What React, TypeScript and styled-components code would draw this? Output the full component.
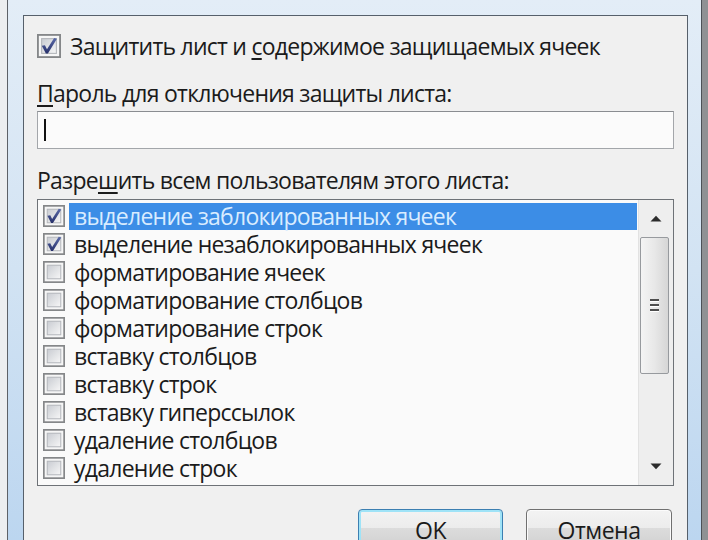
import React, { FC } from 'react'
import styled, { createGlobalStyle } from 'styled-components';

const GlobalStyle = createGlobalStyle`
    html, body {
        margin: 0;
        padding: 0;
        background: #eceef0;
    }
    #root {
        width: 708px;
        height: 540px;
    }
`;

const Screen = styled.div`
    width: 708px;
    height: 540px;
    overflow: hidden;
    padding-left: 7px;
    box-sizing: border-box;
    background: linear-gradient(to right, #eceef0 50%, #8f9194 50%);
    font-family: "Open Sans", "Noto Sans", sans-serif;
    color: #1b1b1b;
`;

const WindowFrame = styled.div`
    width: 695px;
    height: 600px;
    box-sizing: border-box;
    padding: 15px 13px 0 15px;
    border-left: 1px solid #5d6167;
    border-right: 1px solid #4c5157;
    background: linear-gradient(to bottom, #e3edf7 0%, #d2e3f3 45%, #b7d3ef 100%);
`;

const Client = styled.div`
    height: 100%;
    box-sizing: border-box;
    border: 1px solid #56606b;
    border-bottom: none;
    background: #f0f0f0;
    padding: 18px 13px 0 13px;
    display: flex;
    flex-direction: column;
`;

const CheckRow = styled.label`
    display: flex;
    align-items: center;
    height: 24px;
    gap: 9px;
    font-size: 23px;
    line-height: 24px;
    letter-spacing: -0.75px;
    white-space: nowrap;
`;

const FieldLabel = styled.div<{ $gap: number }>`
    margin-top: ${p => p.$gap}px;
    font-size: 23px;
    line-height: 28px;
    letter-spacing: -0.75px;
    white-space: nowrap;
`;

const Key = styled.span`
    text-decoration: underline;
    text-decoration-thickness: 2px;
    text-underline-offset: 3px;
`;

const PasswordBox = styled.div`
    margin-top: 4px;
    height: 38px;
    box-sizing: border-box;
    border: 1px solid #a3a6aa;
    border-top-color: #8a8d91;
    background: #fbfbfb;
    display: flex;
    align-items: center;
    padding-left: 6px;
`;

const Caret = styled.div`
    width: 2px;
    height: 22px;
    background: #111;
`;

const ListBox = styled.div`
    margin-top: 5px;
    height: 287px;
    box-sizing: border-box;
    border: 1px solid #6e7277;
    background: #fafafa;
    display: flex;
`;

const Items = styled.div`
    flex: 1;
    padding: 2px 1px 0 5px;
    display: flex;
    flex-direction: column;
`;

const ItemRow = styled.div`
    display: flex;
    align-items: center;
    height: 28px;
    gap: 4px;
`;

const ItemText = styled.div<{ $selected?: boolean }>`
    flex: 1;
    height: 27px;
    display: flex;
    align-items: center;
    padding-left: 5px;
    font-size: 23px;
    line-height: 27px;
    letter-spacing: -0.75px;
    white-space: nowrap;
    background: ${p => (p.$selected ? '#3c8de6' : 'transparent')};
    color: ${p => (p.$selected ? '#d9ecff' : '#1b1b1b')};
`;

const ScrollBar = styled.div`
    width: 34px;
    background: #eeeeee;
    border-left: 1px solid #e2e2e2;
    display: flex;
    flex-direction: column;
`;

const ArrowButton = styled.div`
    height: 37px;
    display: flex;
    align-items: center;
    justify-content: center;
`;

const Thumb = styled.div`
    height: 137px;
    margin: 0 4px 0 1px;
    box-sizing: border-box;
    border: 1px solid #979a9e;
    border-radius: 2px;
    background: linear-gradient(to right, #f4f4f4 0%, #e8e8e8 50%, #d6d6d6 100%);
    display: flex;
    align-items: center;
    justify-content: center;
`;

const Track = styled.div`
    flex: 1;
`;

const Gripper = styled.div`
    display: flex;
    flex-direction: column;
    gap: 2px;
    & span {
        width: 9px;
        height: 2px;
        background: #4d4d4d;
        border-bottom: 1px solid #fff;
    }
`;

const Buttons = styled.div`
    margin-top: 23px;
    margin-right: 2px;
    display: flex;
    justify-content: flex-end;
    gap: 23px;
`;

const DialogButton = styled.div<{ $default?: boolean }>`
    width: ${p => (p.$default ? 145 : 146)}px;
    height: 42px;
    box-sizing: border-box;
    border-radius: 4px;
    border: 1px solid ${p => (p.$default ? '#3c7fb1' : '#707070')};
    box-shadow: ${p => (p.$default ? 'inset 0 0 0 2px #9fe3f7' : 'inset 0 0 0 1px #fbfbfb')};
    background: linear-gradient(to bottom, #f3f3f3 0%, #ececec 45%, #dcdcdc 46%, #cfcfcf 100%);
    display: flex;
    align-items: center;
    justify-content: center;
    font-size: 23px;
    line-height: 28px;
    letter-spacing: -0.5px;
    color: #1b1b1b;
`;

interface CheckProps {
    size: number,
    checked?: boolean,
}

const CheckBox: FC<CheckProps> = ({ size, checked }) => (
    <svg width={size} height={size} viewBox="0 0 13 13" style={{ flexShrink: 0 }}>
        <defs>
            <linearGradient id="cbInner" x1="0" y1="0" x2="1" y2="1">
                <stop offset="0" stopColor="#c9ccd2" />
                <stop offset="1" stopColor="#f7f7f7" />
            </linearGradient>
            <linearGradient id="cbMark" x1="0" y1="0" x2="0" y2="1">
                <stop offset="0" stopColor="#5a6aa8" />
                <stop offset="1" stopColor="#27306a" />
            </linearGradient>
        </defs>
        <rect x="0.5" y="0.5" width="12" height="12" fill="#f6f6f6" stroke="#858789" />
        <rect x="2.5" y="2.5" width="8" height="8" fill="url(#cbInner)" stroke="#b4b7bc" strokeWidth="0.6" />
        {checked && (
            <path d="M2.6 6.4 L4.3 6.1 L5.4 8.3 L9.3 2.2 L10.8 2.6 L5.9 10.6 L4.8 10.6 Z" fill="url(#cbMark)" />
        )}
    </svg>
);

const Arrow: FC<{ up?: boolean }> = ({ up }) => (
    <svg width="12" height="7" viewBox="0 0 12 7">
        {up
            ? <path d="M0.5 6.5 L6 0.8 L11.5 6.5 Z" fill="#2c2c2c" />
            : <path d="M0.5 0.5 L11.5 0.5 L6 6.2 Z" fill="#2c2c2c" />}
    </svg>
);

const permissions = [
    { text: 'выделение заблокированных ячеек', checked: true },
    { text: 'выделение незаблокированных ячеек', checked: true },
    { text: 'форматирование ячеек', checked: false },
    { text: 'форматирование столбцов', checked: false },
    { text: 'форматирование строк', checked: false },
    { text: 'вставку столбцов', checked: false },
    { text: 'вставку строк', checked: false },
    { text: 'вставку гиперссылок', checked: false },
    { text: 'удаление столбцов', checked: false },
    { text: 'удаление строк', checked: false },
];

const App: FC = () => {
    return (
        <Screen>
            <GlobalStyle />
            <WindowFrame>
                <Client>
                    <CheckRow>
                        <CheckBox size={24} checked />
                        <span>Защитить лист и <Key>с</Key>одержимое защищаемых ячеек</span>
                    </CheckRow>
                    <FieldLabel $gap={21}><Key>П</Key>ароль для отключения защиты листа:</FieldLabel>
                    <PasswordBox>
                        <Caret />
                    </PasswordBox>
                    <FieldLabel $gap={17}>Разре<Key>ш</Key>ить всем пользователям этого листа:</FieldLabel>
                    <ListBox>
                        <Items>
                            {permissions.map((item, i) => (
                                <ItemRow key={item.text}>
                                    <CheckBox size={22} checked={item.checked} />
                                    <ItemText $selected={i === 0}>{item.text}</ItemText>
                                </ItemRow>
                            ))}
                        </Items>
                        <ScrollBar>
                            <ArrowButton><Arrow up /></ArrowButton>
                            <Thumb>
                                <Gripper><span /><span /><span /></Gripper>
                            </Thumb>
                            <Track />
                            <ArrowButton><Arrow /></ArrowButton>
                        </ScrollBar>
                    </ListBox>
                    <Buttons>
                        <DialogButton $default>OK</DialogButton>
                        <DialogButton>Отмена</DialogButton>
                    </Buttons>
                </Client>
            </WindowFrame>
        </Screen>
    )
}

export default App
